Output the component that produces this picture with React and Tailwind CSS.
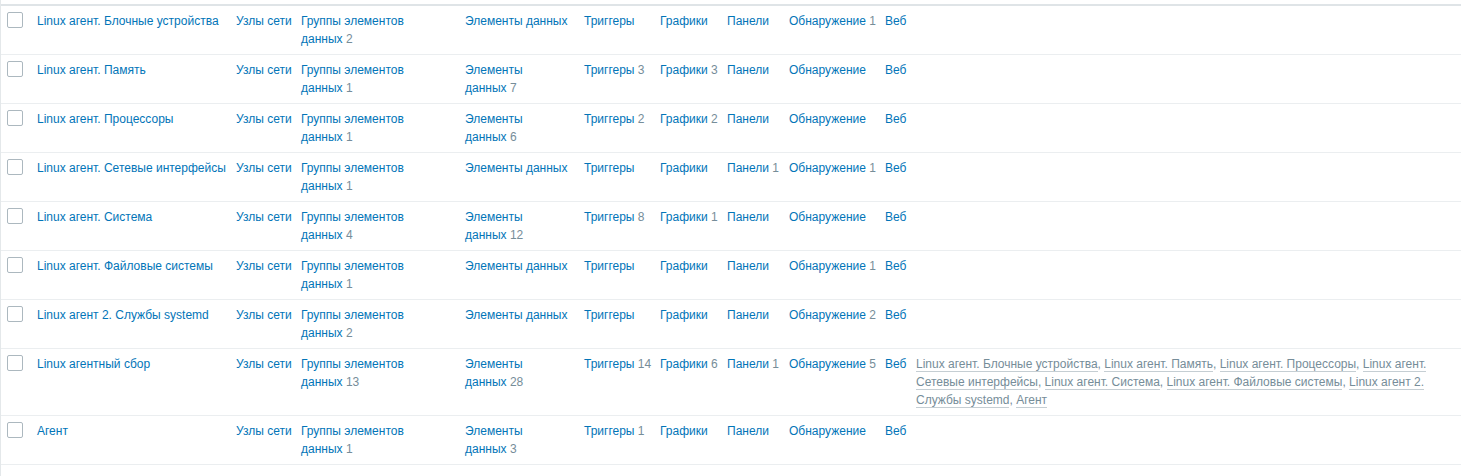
const rows = [
  { name: 'Linux агент. Блочные устройства', groups: 2, discovery: 1 },
  { name: 'Linux агент. Память', groups: 1, items: 7, triggers: 3, graphs: 3 },
  { name: 'Linux агент. Процессоры', groups: 1, items: 6, triggers: 2, graphs: 2 },
  { name: 'Linux агент. Сетевые интерфейсы', groups: 1, dashboards: 1, discovery: 1 },
  { name: 'Linux агент. Система', groups: 4, items: 12, triggers: 8, graphs: 1 },
  { name: 'Linux агент. Файловые системы', groups: 1, discovery: 1 },
  { name: 'Linux агент 2. Службы systemd', groups: 2, discovery: 2 },
  {
    name: 'Linux агентный сбор',
    groups: 13,
    items: 28,
    triggers: 14,
    graphs: 6,
    dashboards: 1,
    discovery: 5,
    linked: [
      'Linux агент. Блочные устройства',
      'Linux агент. Память',
      'Linux агент. Процессоры',
      'Linux агент. Сетевые интерфейсы',
      'Linux агент. Система',
      'Linux агент. Файловые системы',
      'Linux агент 2. Службы systemd',
      'Агент',
    ],
  },
  { name: 'Агент', groups: 1, items: 3, triggers: 1 },
]

// link with optional grey counter; last word sticks to the counter
function CountLink({ label, count }) {
  const words = label.split(' ')
  const last = words.pop()
  const head = words.join(' ')
  return (
    <>
      <a href="#" className="text-[#0275b8]">
        {head && head + ' '}
      </a>
      <span className="whitespace-nowrap">
        <a href="#" className="text-[#0275b8]">{last}</a>
        {count != null && <span className="text-[#768d99]"> {count}</span>}
      </span>
    </>
  )
}

function Row({ row }) {
  const td = 'align-top px-[5px] py-[6px]'
  const tdn = 'align-top px-[5px] py-[6px] whitespace-nowrap'
  return (
    <tr className="border-b border-[#ebeef0]">
      <td className="align-top pl-[6px] pr-[5px] py-[6px]">
        <span className="block w-4 h-4 rounded-[2px] border border-[#acb8bf] bg-white" />
      </td>
      <td className={tdn}>
        <a href="#" className="text-[#0275b8]">{row.name}</a>
      </td>
      <td className={tdn}>
        <CountLink label="Узлы сети" />
      </td>
      <td className={td}>
        <CountLink label="Группы элементов данных" count={row.groups} />
      </td>
      <td className={td}>
        <CountLink label="Элементы данных" count={row.items} />
      </td>
      <td className={tdn}>
        <CountLink label="Триггеры" count={row.triggers} />
      </td>
      <td className={tdn}>
        <CountLink label="Графики" count={row.graphs} />
      </td>
      <td className={tdn}>
        <CountLink label="Панели" count={row.dashboards} />
      </td>
      <td className={tdn}>
        <CountLink label="Обнаружение" count={row.discovery} />
      </td>
      <td className={tdn}>
        <CountLink label="Веб" />
      </td>
      <td className={td}>
        {row.linked &&
          row.linked.map((t, i) => (
            <span key={t} className="text-[#768d99]">
              <a href="#" className="text-[#768d99] border-b border-[#c5ced3]">{t}</a>
              {i < row.linked.length - 1 && ', '}
            </span>
          ))}
      </td>
    </tr>
  )
}

export default function App() {
  return (
    <div
      className="min-h-screen bg-white border-l border-[#e4e8ea] pt-[4px] text-[12px] leading-[18px]"
      style={{ fontFamily: '"Liberation Sans", Arial, sans-serif' }}
    >
      <table className="w-full table-fixed border-collapse border-t-2 border-[#dfe4e7]">
        <colgroup>
          <col className="w-[31px]" />
          <col className="w-[199px]" />
          <col className="w-[65px]" />
          <col className="w-[164px]" />
          <col className="w-[119px]" />
          <col className="w-[76px]" />
          <col className="w-[67px]" />
          <col className="w-[62px]" />
          <col className="w-[96px]" />
          <col className="w-[31px]" />
          <col />
        </colgroup>
        <tbody>
          {rows.map((r) => (
            <Row key={r.name} row={r} />
          ))}
        </tbody>
      </table>
    </div>
  )
}
